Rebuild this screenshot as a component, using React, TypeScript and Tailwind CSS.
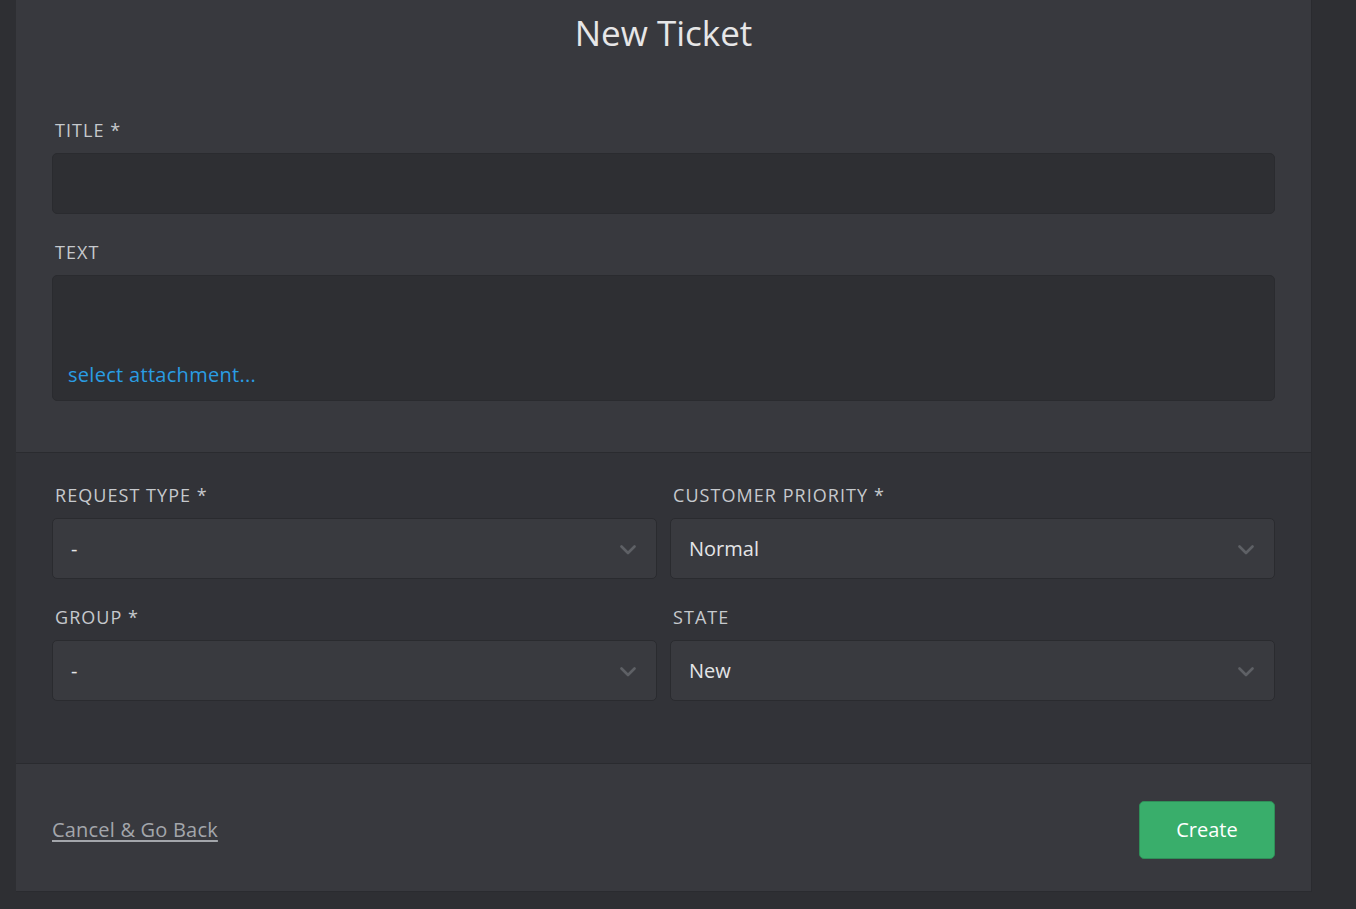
import React from 'react';

const font = { fontFamily: '"Open Sans", "Noto Sans", sans-serif' };

function Label({ children }: { children: React.ReactNode }) {
  return (
    <div className="pl-[3px] text-[18px] leading-6 uppercase tracking-[1.05px] text-[#c6c9cd]">
      {children}
    </div>
  );
}

function Chevron() {
  return (
    <svg width="16" height="10" viewBox="0 0 16 10" fill="none" className="mt-[2px]">
      <polyline points="1.5,1.5 8,8 14.5,1.5" stroke="#5e6065" strokeWidth="2.6" strokeLinecap="round" strokeLinejoin="round" />
    </svg>
  );
}

function Select({ label, value }: { label: string; value: string }) {
  return (
    <div className="flex flex-col gap-[11px]">
      <Label>{label}</Label>
      <div className="flex h-[61px] items-center justify-between rounded-[5px] border border-[#2a2b2f] bg-[#393a3f] pl-[18px] pr-[20px]">
        <span className="text-[20px] text-[#e4e5e7]">{value}</span>
        <Chevron />
      </div>
    </div>
  );
}

export default function App() {
  return (
    <div className="flex min-h-[909px] bg-[#2e2f33] pl-4 pr-[44px]" style={font}>
      <div className="flex w-[1296px] flex-col self-start border-r border-b border-[#2a2b2f]">
        <section className="bg-[#38393e] px-9 pt-2 pb-[51px]">
          <h1 className="text-center text-[35px] leading-[49px] text-[#e6e6e7]">New Ticket</h1>

          <div className="mt-[61px] flex flex-col gap-[11px]">
            <Label>Title *</Label>
            <div className="h-[61px] rounded-[5px] border border-[#2a2b2f] bg-[#2e2f33]" />
          </div>

          <div className="mt-[26px] flex flex-col gap-[11px]">
            <Label>Text</Label>
            <div className="flex h-[126px] flex-col justify-end rounded-[5px] border border-[#2a2b2f] bg-[#2e2f33] px-[15px] pb-[13px]">
              <a className="text-[20px] leading-6 tracking-[0.3px] text-[#2a9de3]">select attachment...</a>
            </div>
          </div>
        </section>

        <section className="border-t border-[#2a2b2f] bg-[#323338] px-9 pt-[30px] pb-[62px]">
          <div className="grid grid-cols-2 gap-x-[13px] gap-y-[26px]">
            <Select label="Request Type *" value="-" />
            <Select label="Customer Priority *" value="Normal" />
            <Select label="Group *" value="-" />
            <Select label="State" value="New" />
          </div>
        </section>

        <footer className="flex items-center justify-between border-t border-[#2a2b2f] bg-[#38393e] px-9 pt-[37px] pb-[32px]">
          <a className="text-[20px] leading-6 tracking-[0.2px] text-[#a3a6ab] underline underline-offset-[3px]">Cancel &amp; Go Back</a>
          <button className="h-[58px] w-[136px] rounded-[5px] border border-[#2f8f58] bg-[#39ae6b] text-[20px] text-white">
            Create
          </button>
        </footer>
      </div>
    </div>
  );
}
